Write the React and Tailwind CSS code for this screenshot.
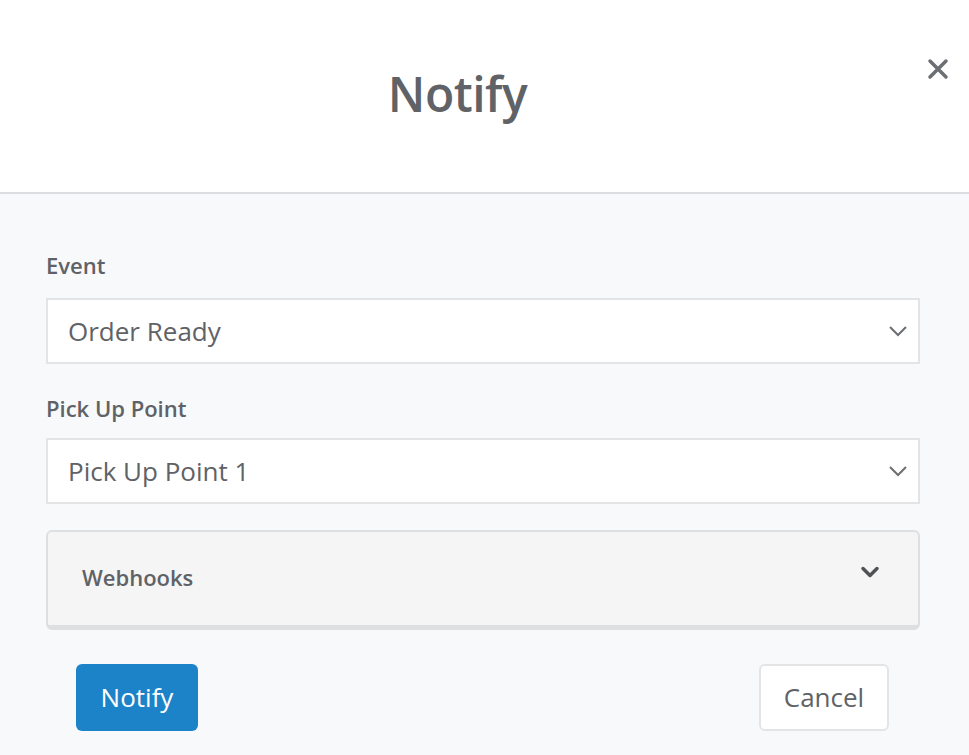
import { ChevronDown } from 'lucide-react';

function Select({ value }) {
  return (
    <div className="flex h-[66px] items-center justify-between border-2 border-[#e3e4e6] bg-white pl-[20px] pr-[8px]">
      <span className="text-[26px] text-[#5f6266]">{value}</span>
      <svg width="20" height="12" viewBox="0 0 20 12" className="mr-[2px]">
        <path d="M2 2 L10 10 L18 2" fill="none" stroke="#6b6e72" strokeWidth="2" />
      </svg>
    </div>
  );
}

export default function App() {
  return (
    <div className="h-[755px] w-[969px] overflow-hidden bg-[#f8f9fb] font-['Open_Sans',sans-serif]">
      <header className="relative flex h-[194px] items-center justify-center border-b-2 border-[#dcdde0] bg-white pr-[54px]">
        <h1 className="mt-[-4px] text-[48px] font-semibold tracking-[-0.5px] text-[#5f6266]">Notify</h1>
        <button className="absolute right-[20px] top-[58px] text-[#6b6e72]">
          <svg width="22" height="22" viewBox="0 0 22 22">
            <path d="M3 3 L19 19 M19 3 L3 19" stroke="currentColor" strokeWidth="3.5" strokeLinecap="round" />
          </svg>
        </button>
      </header>

      <main className="pl-[46px] pr-[49px] pt-[56px]">
        <label className="block text-[22px] font-semibold leading-[30px] text-[#5f6266]">Event</label>
        <div className="mt-[18px]">
          <Select value="Order Ready" />
        </div>

        <label className="mt-[29px] block text-[22px] font-semibold leading-[30px] text-[#5f6266]">Pick Up Point</label>
        <div className="mt-[15px]">
          <Select value="Pick Up Point 1" />
        </div>

        <div className="mt-[26px] flex h-[100px] items-center justify-between rounded-[6px] border-2 border-b-[5px] border-[#dedfe1] bg-[#f5f5f5] pl-[34px] pr-[34px]">
          <span className="mb-[2px] text-[22px] font-semibold text-[#5f6266]">Webhooks</span>
          <ChevronDown size={28} strokeWidth={3} className="mb-[14px] text-[#505256]" />
        </div>

        <div className="mt-[34px] flex items-center justify-between pl-[30px] pr-[31px]">
          <button className="h-[67px] w-[122px] rounded-[6px] bg-[#1c83c9] text-[26px] text-white">Notify</button>
          <button className="h-[67px] w-[130px] rounded-[6px] border-2 border-[#e3e4e6] bg-white text-[26px] text-[#5f6266]">Cancel</button>
        </div>
      </main>
    </div>
  );
}
